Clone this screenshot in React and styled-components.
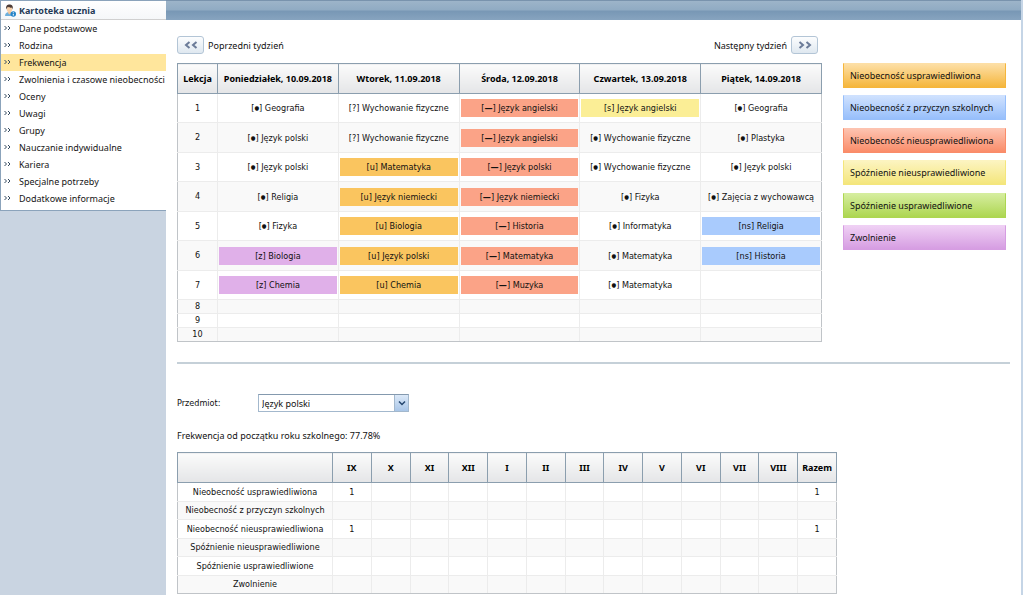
import React, {useState} from 'react';
import styled, {createGlobalStyle} from 'styled-components';

const GlobalStyle = createGlobalStyle`
    * {
        box-sizing: border-box;
    }
    body {
        margin: 0;
        background: #fff;
        color: #111;
        font-family: 'Noto Sans', Tahoma, sans-serif;
        font-size: 9px;
        line-height: 17px;
    }
    button, input {
        font: inherit;
        color: inherit;
    }
`;

const Page = styled.div`
    display: grid;
    grid-template-columns: 166px minmax(0, 1fr);
    min-height: 100vh;
`;
const Sidebar = styled.aside`
    background: #c9d4e1;
`;
const MenuBox = styled.nav`
    background: #fff;
    border: 1px solid #8ba3bb;
    border-width: 1px 0 1px 1px;
    padding-bottom: 3px;
`;
const MenuTitle = styled.h1`
    display: flex;
    align-items: center;
    gap: 3px;
    height: 19px;
    margin: 0;
    padding-left: 3px;
    border-bottom: 1px solid #d0d0d0;
    background: linear-gradient(#fff, #f5f7f9);
    color: #1f3a56;
    font-size: 9px;
`;
const MenuList = styled.ul`
    margin: 0;
    padding: 0;
    list-style: none;
`;
const MenuLink = styled.a`
    display: flex;
    align-items: center;
    height: 17px;
    padding-left: 3px;
    background: ${({$active}) => ($active ? '#ffe69c' : 'transparent')};
    color: #151515;
    text-decoration: none;
    white-space: nowrap;
    svg {
        flex: none;
        margin-right: 8px;
    }
    &:hover {
        background: #ffe69c;
    }
`;

const Main = styled.main`
    border-right: 2px solid #c5d5e6;
`;
const TopBar = styled.div`
    height: 20px;
    border-top: 1px solid #7993ad;
    background: linear-gradient(#9db4c9 0, #90abc3 9px, #7897b5 10px, #87a4bf 100%);
`;
const Content = styled.div`
    padding: 16px 11px 0;
`;
const WeekSection = styled.section`
    display: grid;
    grid-template-columns: minmax(0, 645px) 163px;
    column-gap: 21px;
    padding-bottom: 20px;
    border-bottom: 2px solid #c5d0d8;
`;
const WeekNav = styled.div`
    display: flex;
    justify-content: space-between;
    margin-bottom: 9px;
    padding-right: 4px;
`;
const NavItem = styled.label`
    display: flex;
    align-items: center;
    gap: 4px;
`;
const NavButton = styled.button`
    display: flex;
    align-items: center;
    justify-content: center;
    width: 27px;
    height: 18px;
    padding: 0;
    border: 1px solid #b3c5d6;
    border-radius: 3px;
    background: linear-gradient(#fcfdfe, #dfe8f0);
    cursor: pointer;
`;

const Table = styled.table`
    width: 100%;
    table-layout: fixed;
    border-collapse: collapse;
    text-align: center;
    th {
        height: 30px;
        padding: 0;
        border: 1px solid #8b9eae;
        background: linear-gradient(#fbfbfb, #e4e5e7);
        color: #000;
        font-weight: bold;
        white-space: nowrap;
    }
    td {
        padding: 0;
        border: 1px solid #ececec;
        font-family: 'DejaVu Sans Condensed', Tahoma, sans-serif;
        white-space: nowrap;
    }
    td:first-child {
        border-left-color: #c0c4c8;
    }
    td:last-child {
        border-right-color: #c0c4c8;
    }
    tbody tr:last-child td {
        border-bottom-color: #c0c4c8;
    }
    tbody tr:nth-child(even) {
        background: #f9f9f9;
    }
`;
const WeekTable = styled(Table)`
    th:first-child {
        width: 40px;
    }
`;
const LessonRow = styled.tr`
    height: 29px;
    &:nth-child(even) {
        height: 30px;
    }
`;
const EmptyRow = styled.tr`
    height: 14px;
    line-height: 13px;
`;
const MARKS = {
    u: '#fac55f',
    ns: '#a9cbfd',
    '—': '#fba387',
    s: '#fbee96',
    z: '#e0b0e9',
};
const Entry = styled.div`
    height: 18px;
    margin: 0 1px;
    line-height: 18px;
    background: ${({$mark}) => MARKS[$mark] || 'transparent'};
`;
const Dot = styled.span`
    font-size: 6px;
    vertical-align: 1px;
    line-height: 1;
`;

const Legend = styled.ul`
    display: flex;
    flex-direction: column;
    justify-content: space-between;
    height: 187px;
    margin: 27px 0 0;
    padding: 0;
    list-style: none;
`;
const LegendItem = styled.li`
    height: 25px;
    padding-left: 6px;
    border: 1px solid ${({$to}) => $to};
    border-top-color: ${({$from}) => $from};
    background: linear-gradient(${({$from}) => $from}, ${({$to}) => $to});
    line-height: 23px;
    white-space: nowrap;
`;

const SubjectField = styled.div`
    display: flex;
    align-items: center;
    margin-top: 30px;
    label {
        width: 81px;
        font-family: 'DejaVu Sans Condensed', Tahoma, sans-serif;
    }
`;
const Combo = styled.div`
    display: flex;
    width: 151px;
    height: 18px;
    border: 1px solid #a3b8cd;
    border-top-color: #8499ae;
    input {
        flex: 1;
        min-width: 0;
        padding: 0 3px;
        border: 0;
        outline: 0;
        background: #fff;
    }
    button {
        display: flex;
        align-items: center;
        justify-content: center;
        width: 14px;
        padding: 0;
        border: 0;
        border-left: 1px solid #a3b8cd;
        background: linear-gradient(#dce9f8, #a9c6e8);
    }
`;
const Summary = styled.p`
    margin: 15px 0 8px;
`;
const MonthTable = styled(Table)`
    max-width: 660px;
    th:first-child {
        width: 155px;
    }
`;
const MonthRow = styled.tr`
    height: 19px;
    &:nth-child(even) {
        height: 18px;
    }
`;

const menu = [
    'Dane podstawowe', 'Rodzina', 'Frekwencja', 'Zwolnienia i czasowe nieobecności',
    'Oceny', 'Uwagi', 'Grupy', 'Nauczanie indywidualne', 'Kariera',
    'Specjalne potrzeby', 'Dodatkowe informacje',
];
const days = [
    'Poniedziałek, 10.09.2018', 'Wtorek, 11.09.2018', 'Środa, 12.09.2018',
    'Czwartek, 13.09.2018', 'Piątek, 14.09.2018',
];
const lessons = [
    [['●', 'Geografia'], ['?', 'Wychowanie fizyczne'], ['—', 'Język angielski'], ['s', 'Język angielski'], ['●', 'Geografia']],
    [['●', 'Język polski'], ['?', 'Wychowanie fizyczne'], ['—', 'Język angielski'], ['●', 'Wychowanie fizyczne'], ['●', 'Plastyka']],
    [['●', 'Język polski'], ['u', 'Matematyka'], ['—', 'Język polski'], ['●', 'Wychowanie fizyczne'], ['●', 'Język polski']],
    [['●', 'Religia'], ['u', 'Język niemiecki'], ['—', 'Język niemiecki'], ['●', 'Fizyka'], ['●', 'Zajęcia z wychowawcą']],
    [['●', 'Fizyka'], ['u', 'Biologia'], ['—', 'Historia'], ['●', 'Informatyka'], ['ns', 'Religia']],
    [['z', 'Biologia'], ['u', 'Język polski'], ['—', 'Matematyka'], ['●', 'Matematyka'], ['ns', 'Historia']],
    [['z', 'Chemia'], ['u', 'Chemia'], ['—', 'Muzyka'], ['●', 'Matematyka'], null],
];
const legend = [
    ['Nieobecność usprawiedliwiona', '#fddfa6', '#f5b63c'],
    ['Nieobecność z przyczyn szkolnych', '#cfe1fe', '#97bffb'],
    ['Nieobecność nieusprawiedliwiona', '#fdc3b0', '#fa8c69'],
    ['Spóźnienie nieusprawiedliwione', '#fcf4c0', '#f4e67c'],
    ['Spóźnienie usprawiedliwione', '#d5ed9e', '#add651'],
    ['Zwolnienie', '#efd0f4', '#d69de2'],
];
const months = ['IX', 'X', 'XI', 'XII', 'I', 'II', 'III', 'IV', 'V', 'VI', 'VII', 'VIII', 'Razem'];
const counts = [{IX: 1, Razem: 1}, {}, {IX: 1, Razem: 1}, {}, {}, {}];

const StudentIcon = () => (
    <svg width="12" height="13" viewBox="0 0 12 13">
        <path d="M1 12 C1 9 3 8 5 8 C7 8 9 9 9 12Z" fill="#6eb0dc"/>
        <path d="M4 7h3v2l-1.500 1.500L4 9z" fill="#f0c39a"/>
        <ellipse cx="5.500" cy="5" rx="2.700" ry="3.300" fill="#f6cfa8"/>
        <path d="M2.300 5.500C1.500 1.500 3.500.500 5.500.500S9.500 1.500 8.700 5.500L8 3.500C6.500 4 4.500 3.500 4 2.800L2.900 4z" fill="#4b3a35"/>
        <circle cx="9.300" cy="10" r="2.700" fill="#2383c8"/>
        <path d="M9.300 8.300v.8M9.300 9.800v1.800" stroke="#fff" strokeWidth="1"/>
    </svg>
);
const MenuArrows = () => (
    <svg width="7" height="6" viewBox="0 0 7 6" fill="none" stroke="#33485e">
        <path d="M.500 0l2 2-2 2M4 0l2 2-2 2"/>
    </svg>
);
const Chevrons = ({back}) => (
    <svg width="14" height="8" viewBox="0 0 14 8" fill="none" stroke="#6b7b98" strokeWidth="2">
        <path d={back ? 'M5.500 1L2 4 5.500 7M12.500 1L9 4 12.500 7' : 'M1.500 1L5 4 1.500 7M8.500 1L12 4 8.500 7'}/>
    </svg>
);
const DownArrow = () => (
    <svg width="8" height="6" viewBox="0 0 8 6" fill="none" stroke="#24466e" strokeWidth="1.500">
        <path d="M1 1.500l3 3 3-3"/>
    </svg>
);

const Mark = ({code}) => {
    if (code === '●') return <>[<Dot>{code}</Dot>]</>;
    if (code === '—') return <>[<b>{code}</b>]</>;
    return <>[{code}]</>;
};

const App = () => {
    const [subject, setSubject] = useState('Język polski');

    return (
        <Page>
            <GlobalStyle/>
            <Sidebar>
                <MenuBox>
                    <MenuTitle><StudentIcon/>Kartoteka ucznia</MenuTitle>
                    <MenuList>
                        {menu.map(item => (
                            <li key={item}>
                                <MenuLink href="#" $active={item === 'Frekwencja'}>
                                    <MenuArrows/>{item}
                                </MenuLink>
                            </li>
                        ))}
                    </MenuList>
                </MenuBox>
            </Sidebar>

            <Main>
                <TopBar/>
                <Content>
                    <WeekSection>
                        <div>
                            <WeekNav>
                                <NavItem>
                                    <NavButton type="button"><Chevrons back/></NavButton>
                                    Poprzedni tydzień
                                </NavItem>
                                <NavItem>
                                    Następny tydzień
                                    <NavButton type="button"><Chevrons/></NavButton>
                                </NavItem>
                            </WeekNav>
                            <WeekTable>
                                <thead>
                                    <tr>
                                        <th>Lekcja</th>
                                        {days.map(day => <th key={day}>{day}</th>)}
                                    </tr>
                                </thead>
                                <tbody>
                                    {lessons.map((row, i) => (
                                        <LessonRow key={i}>
                                            <td>{i + 1}</td>
                                            {row.map((cell, j) => (
                                                <td key={j}>
                                                    {cell && (
                                                        <Entry $mark={cell[0]}>
                                                            <Mark code={cell[0]}/> {cell[1]}
                                                        </Entry>
                                                    )}
                                                </td>
                                            ))}
                                        </LessonRow>
                                    ))}
                                    {[8, 9, 10].map(n => (
                                        <EmptyRow key={n}>
                                            <td>{n}</td>
                                            {days.map(day => <td key={day}/>)}
                                        </EmptyRow>
                                    ))}
                                </tbody>
                            </WeekTable>
                        </div>
                        <Legend>
                            {legend.map(([name, from, to]) => (
                                <LegendItem key={name} $from={from} $to={to}>{name}</LegendItem>
                            ))}
                        </Legend>
                    </WeekSection>

                    <SubjectField>
                        <label htmlFor="subject">Przedmiot:</label>
                        <Combo>
                            <input
                                id="subject"
                                autoFocus
                                value={subject}
                                onChange={e => setSubject(e.target.value)}
                            />
                            <button type="button" aria-label="Przedmiot"><DownArrow/></button>
                        </Combo>
                    </SubjectField>
                    <Summary>Frekwencja od początku roku szkolnego: 77.78%</Summary>
                    <MonthTable>
                        <thead>
                            <tr>
                                <th/>
                                {months.map(month => <th key={month}>{month}</th>)}
                            </tr>
                        </thead>
                        <tbody>
                            {legend.map(([name], i) => (
                                <MonthRow key={name}>
                                    <td>{name}</td>
                                    {months.map(month => <td key={month}>{counts[i][month]}</td>)}
                                </MonthRow>
                            ))}
                        </tbody>
                    </MonthTable>
                </Content>
            </Main>
        </Page>
    );
};

export default App;
